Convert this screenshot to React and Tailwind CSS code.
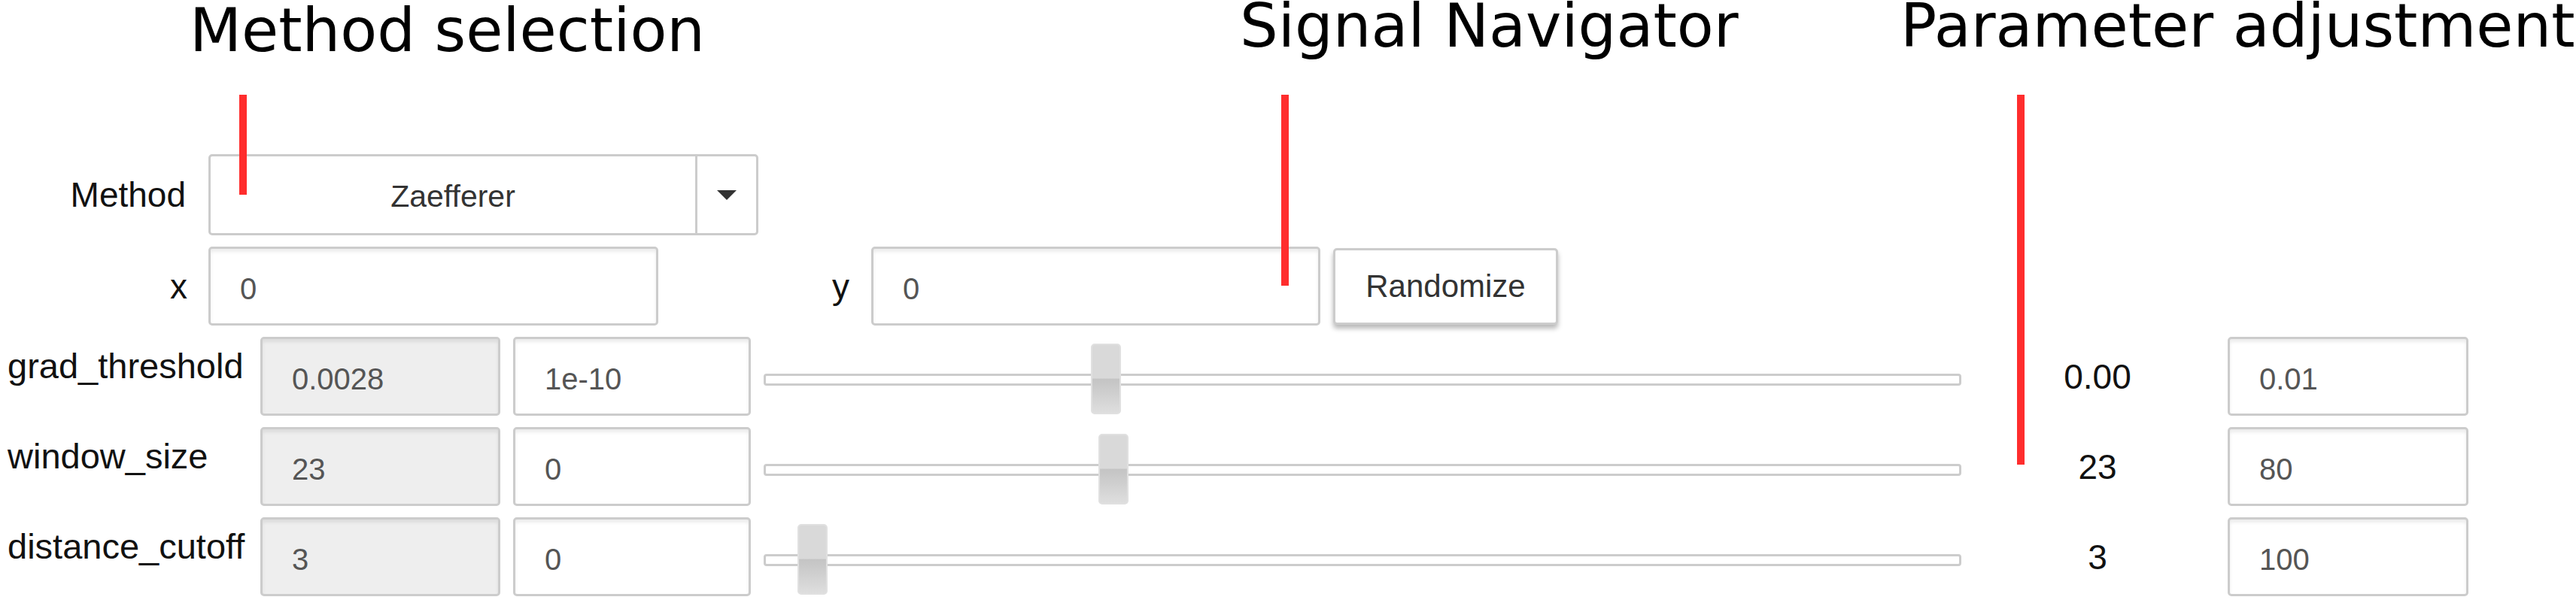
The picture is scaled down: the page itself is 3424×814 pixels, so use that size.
import React from "react";

function Field({ value, grey = false, className = "" }) {
  return (
    <div
      className={
        "h-[105px] flex items-center pl-[39px] pt-[6px] border-[3px] border-[#cccccc] rounded-[5px] shadow-[inset_0_4px_4px_rgba(0,0,0,0.075)] text-[40px] leading-none text-[#555555] " +
        (grey ? "bg-[#eeeeee] " : "bg-white ") +
        className
      }
    >
      {value}
    </div>
  );
}

function Slider({ pos }) {
  return (
    <div className="relative ml-[17px] w-[1592px] h-[105px]">
      <div className="mt-[49px] h-[16px] w-full border-[3px] border-[#cccccc] rounded-[4px] bg-white" />
      <div
        className="absolute top-[9px] w-[40px] h-[94px] rounded-[5px] border-2 border-[#e0e0e0] bg-[linear-gradient(180deg,#d9d9d9_0%,#d9d9d9_49%,#c4c4c4_50%,#dedede_100%)]"
        style={{ left: pos }}
      />
    </div>
  );
}

function ParamRow({ label, current, min, pos, value, max }) {
  return (
    <div className="flex h-[105px] pl-[10px]">
      <div className="w-[336px] pt-[12px] text-[47px] leading-[54px] text-[#111111] whitespace-nowrap">
        {label}
      </div>
      <Field value={current} grey className="w-[319px]" />
      <Field value={min} className="ml-[17px] w-[316px]" />
      <Slider pos={pos} />
      <div className="ml-[8px] w-[346px] self-center text-center text-[46px] leading-none text-[#111111]">
        {value}
      </div>
      <Field value={max} className="w-[320px]" />
    </div>
  );
}

export default function App() {
  return (
    <div className="relative w-[3424px] h-[814px] overflow-hidden bg-white font-['Liberation_Sans',Arial,sans-serif]">
      <div className="flex flex-col pt-[205px] gap-[15px]">
        {/* Method row */}
        <div className="flex items-center h-[108px]">
          <div className="w-[247px] text-right text-[46px] leading-none text-[#111111]">Method</div>
          <div className="ml-[30px] w-[731px] h-[108px] flex border-[3px] border-[#cccccc] rounded-[5px] bg-white">
            <div className="flex-1 flex items-center justify-center pt-[4px] text-[41px] leading-none text-[#333333]">
              Zaefferer
            </div>
            <div className="w-[81px] border-l-[3px] border-[#cccccc] flex items-center justify-center">
              <svg width="26" height="13" viewBox="0 0 26 13">
                <polygon points="0,0 26,0 13,13" fill="#333333" />
              </svg>
            </div>
          </div>
        </div>

        {/* Signal navigator row */}
        <div className="flex items-center h-[105px]">
          <div className="w-[249px] text-right text-[46px] leading-none text-[#111111]">x</div>
          <Field value="0" className="ml-[28px] w-[598px]" />
          <div className="w-[254px] text-right text-[46px] leading-none text-[#111111]">y</div>
          <Field value="0" className="ml-[29px] w-[597px]" />
          <button className="ml-[17px] w-[299px] h-[102px] flex items-center justify-center border-[3px] border-[#cccccc] rounded-[5px] bg-white shadow-[0_5px_6px_rgba(0,0,0,0.28)] text-[42px] leading-none text-[#333333]">
            Randomize
          </button>
        </div>

        <ParamRow label="grad_threshold" current="0.0028" min="1e-10" pos={435} value="0.00" max="0.01" />
        <ParamRow label="window_size" current="23" min="0" pos={445} value="23" max="80" />
        <ParamRow label="distance_cutoff" current="3" min="0" pos={45} value="3" max="100" />
      </div>

      {/* Annotations overlay */}
      <div className="absolute left-[252px] top-[7px] whitespace-nowrap font-['DejaVu_Sans',sans-serif] text-[80px] leading-[68px] text-black">
        Method selection
      </div>
      <div className="absolute left-[1648px] top-[1px] whitespace-nowrap font-['DejaVu_Sans',sans-serif] text-[80px] leading-[68px] text-black">
        Signal Navigator
      </div>
      <div className="absolute left-[2526px] top-[1px] whitespace-nowrap font-['DejaVu_Sans',sans-serif] text-[80px] leading-[68px] text-black">
        Parameter adjustment
      </div>
      <div className="absolute left-[318px] top-[126px] w-[10px] h-[133px] bg-[#ff2d2d]" />
      <div className="absolute left-[1703px] top-[126px] w-[10px] h-[254px] bg-[#ff2d2d]" />
      <div className="absolute left-[2681px] top-[126px] w-[10px] h-[492px] bg-[#ff2d2d]" />
    </div>
  );
}
